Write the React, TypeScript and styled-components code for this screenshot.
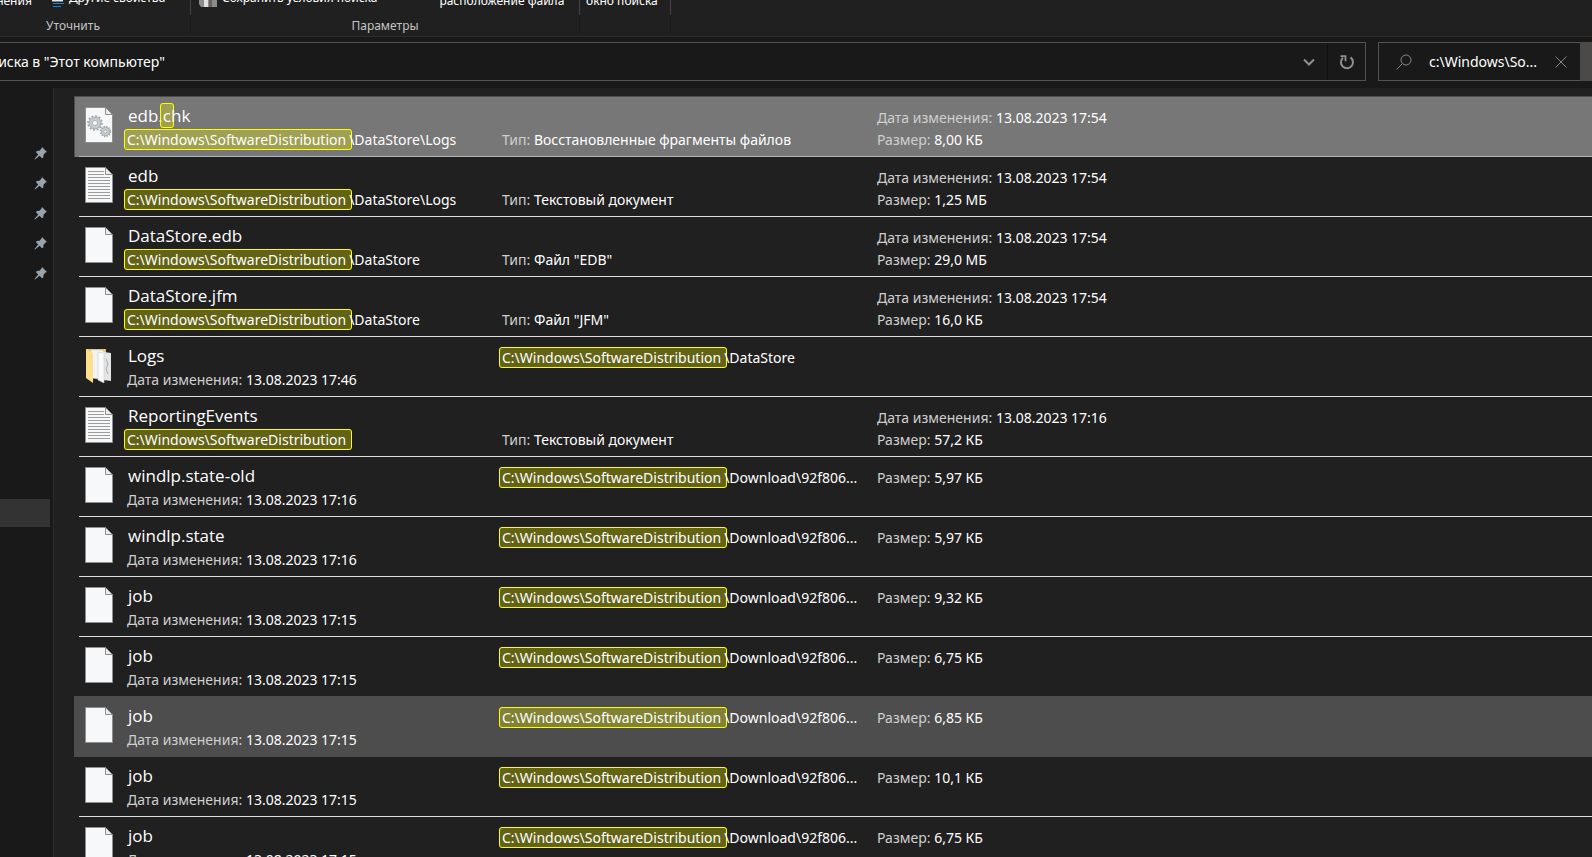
import React from "react";
import styled, { createGlobalStyle, css } from "styled-components";

const GlobalStyle = createGlobalStyle`
  * { box-sizing: border-box; }
  body {
    margin: 0;
    background: #202020;
    color: #ffffff;
    font-family: "Noto Sans", "Open Sans", sans-serif;
    font-size: 14px;
    line-height: 22px;
  }
  button, input { font: inherit; color: inherit; }
`;

const Window = styled.div`
  display: flex;
  flex-direction: column;
  height: 100vh;
  overflow: hidden;
`;

/* Ribbon */

const Ribbon = styled.header`
  display: flex;
  flex: none;
  height: 37px;
  overflow: hidden;
  border-bottom: 1px solid #2b2b2b;
`;

const RibbonGroup = styled.section<{ $width: number; $shift?: number }>`
  display: flex;
  flex-direction: column;
  flex: none;
  width: ${(p) => p.$width}px;
  margin-left: ${(p) => -(p.$shift ?? 0)}px;
`;

const RibbonBody = styled.div`
  display: flex;
  align-items: flex-end;
  height: 15px;
  border-right: 1px solid #444444;
`;

const RibbonLabel = styled.div`
  height: 18px;
  border-right: 1px solid #191919;
  color: #c4c4c4;
  font-size: 12px;
  line-height: 22px;
  text-align: center;
`;

const RibbonButton = styled.button<{ $indent: number; $raised?: boolean }>`
  display: flex;
  align-items: flex-end;
  gap: 5px;
  flex: none;
  margin: 0;
  padding: 0 0 ${(p) => (p.$raised ? 8 : 5)}px;
  margin-left: ${(p) => p.$indent}px;
  border: 0;
  background: none;
  font-size: 12px;
  line-height: 18px;
  white-space: nowrap;
`;

/* Address bar */

const NavBar = styled.div`
  display: flex;
  flex: none;
  gap: 12px;
  height: 51px;
  padding: 5px 0 7px;
  background: #191919;
`;

const Address = styled.div`
  display: flex;
  flex: 1;
  min-width: 0;
  border: 1px solid #535353;
  border-left: 0;
`;

const Crumb = styled.div`
  display: flex;
  align-items: center;
  justify-content: flex-end;
  width: 165px;
  margin-right: auto;
  overflow: hidden;
  white-space: nowrap;
`;

const IconButton = styled.button<{ $width: number; $divided?: boolean }>`
  display: flex;
  align-items: center;
  justify-content: center;
  width: ${(p) => p.$width}px;
  padding: 0;
  border: 0;
  border-left: ${(p) => (p.$divided ? "1px solid #111111" : "0")};
  background: none;
`;

const SearchBox = styled.form`
  display: flex;
  align-items: stretch;
  width: 214px;
  border: 1px solid #535353;
  border-right: 0;
`;

const SearchIcon = styled.span`
  display: flex;
  align-items: center;
  justify-content: center;
  width: 50px;
`;

const SearchInput = styled.input`
  flex: 1;
  min-width: 0;
  padding: 0;
  border: 0;
  outline: 0;
  background: none;
`;

const SearchGo = styled.button`
  width: 12px;
  margin: -1px 0;
  padding: 0;
  border: 0;
  background: #4c4a48;
`;

/* Body */

const Body = styled.div`
  display: flex;
  flex: 1;
  min-height: 0;
`;

const Sidebar = styled.nav`
  flex: none;
  width: 54px;
  padding-top: 50px;
  background: #191919;
  border-right: 1px solid #2b2b2b;
`;

const PinList = styled.ul`
  margin: 0 0 211px;
  padding: 0;
  list-style: none;
`;

const PinItem = styled.li`
  display: flex;
  align-items: center;
  justify-content: flex-end;
  height: 30px;
  padding-right: 5px;
`;

const CurrentItem = styled.div`
  width: 50px;
  height: 28px;
  background: #333333;
`;

const Results = styled.ul`
  flex: 1;
  min-width: 0;
  margin: 0;
  padding: 8px 0 0 20px;
  overflow: hidden;
  list-style: none;
`;

type RowState = "selected" | "hover" | undefined;

const Row = styled.li<{ $state: RowState }>`
  height: 61px;
  margin-bottom: -1px;
  padding-left: 4px;
  border: 1px solid transparent;
  border-width: 1px 0 0 1px;
  position: relative;
  ${(p) =>
    p.$state === "selected" &&
    css`
      background: #777777;
      border-color: #4c4c4c;
    `}
  ${(p) =>
    p.$state === "hover" &&
    css`
      background: #4d4d4d;
      border-color: #4d4d4d;
    `}
`;

const RowInner = styled.div<{ $state: RowState }>`
  display: grid;
  grid-template-columns: 28px 361px 361px 1fr;
  column-gap: 14px;
  height: 60px;
  padding: 10px 0 0 6px;
  border-bottom: 1px solid
    ${(p) => (p.$state === "hover" ? "#4d4d4d" : p.$state === "selected" ? "#b4b4b4" : "#dedede")};
`;

const Cell = styled.div`
  display: flex;
  flex-direction: column;
  min-width: 0;
  white-space: nowrap;
`;

const Line = styled.div`
  height: 22px;
`;

const Title = styled.div`
  height: 22px;
  padding-left: 1px;
  font-family: "Open Sans", "Noto Sans", sans-serif;
  font-size: 17px;
  line-height: 18px;
`;

const Label = styled.span`
  color: #cfcfcf;
`;

const Mark = styled.mark`
  margin: 0 -3px;
  padding: 0 2px;
  border: 1px solid #ffff00;
  border-radius: 3px;
  background: rgba(255, 255, 0, 0.3);
  color: inherit;
`;

const PathMark = styled(Mark)`
  padding-right: 5px;
`;

const PageIcon = ({ kind }: { kind: "blank" | "text" | "gears" }) => (
  <svg width="28" height="36" viewBox="0 0 28 36" aria-hidden="true">
    <path d="M.5.5h20l7 7v28H.5z" fill="#f7f8f9" stroke="#8f8f8f" />
    <path d="M20.5.5v7h7z" fill="#ececec" stroke="#8f8f8f" />
    {kind === "text" &&
      [4, 7, 10, 13, 16, 19, 22, 25, 28, 31].map((y) => (
        <path key={y} d={`M3 ${y + 0.5}h${y < 8 ? 16 : 22}`} stroke="#9c9c9c" />
      ))}
    {kind === "gears" && (
      <g fill="none">
        <circle cx="10" cy="16" r="6.8" stroke="#9aa3a9" strokeWidth="2" strokeDasharray="1.8 1.76" />
        <circle cx="10" cy="16" r="4.5" stroke="#c6cdd1" strokeWidth="3.6" />
        <circle cx="10" cy="16" r="5.9" stroke="#9aa3a9" strokeWidth=".7" />
        <circle cx="10" cy="16" r="2.6" stroke="#9aa3a9" strokeWidth=".8" />
        <circle cx="20.5" cy="24.5" r="4.8" stroke="#9aa3a9" strokeWidth="1.8" strokeDasharray="1.3 1.21" />
        <circle cx="20.5" cy="24.5" r="3" stroke="#c6cdd1" strokeWidth="2.8" />
        <circle cx="20.5" cy="24.5" r="4.1" stroke="#9aa3a9" strokeWidth=".7" />
        <circle cx="20.5" cy="24.5" r="1.6" stroke="#9aa3a9" strokeWidth=".8" />
      </g>
    )}
  </svg>
);

const FolderIcon = () => (
  <svg width="28" height="36" viewBox="0 0 28 36" aria-hidden="true">
    <path d="M1 2h20v28H1z" fill="#e9c46c" />
    <path d="M6 3h11l4 4v26l-14-2z" fill="#f3f3f3" stroke="#d2d2d2" strokeWidth=".6" />
    <path d="M19 5l7 1v28l-7-1z" fill="#e3e5e6" />
    <path d="M13 5l6 1v30l-6-3z" fill="#fafafa" stroke="#cfcfcf" strokeWidth=".6" />
    <path d="M21 12l2 5-2 5 2 5" stroke="#a5abae" fill="none" />
    <path d="M1 2l7 4v30l-7-5z" fill="#ffdf8e" />
  </svg>
);

const PinIcon = () => (
  <svg width="14" height="14" viewBox="0 0 14 14" aria-hidden="true">
    <path d="M8 1l5 5-1.4.6-2.1 2.2-.2 2.8-1.3.6-2.4-2.4L1 13.5.5 13l3.7-4.500L2 6.200l.7-1.300 2.800-.2L7.500 2.500z" fill="#98a3ab" />
  </svg>
);

type Item = {
  name: React.ReactNode;
  icon: "blank" | "text" | "gears" | "folder";
  date: string;
  path: string;
  size?: string;
  type?: string;
  state?: RowState;
};

const download = "\\Download\\92f806...";

const items: Item[] = [
  {
    name: (
      <>
        edb.<Mark>c</Mark>hk
      </>
    ),
    icon: "gears",
    date: "13.08.2023 17:54",
    path: "\\DataStore\\Logs",
    type: "Восстановленные фрагменты файлов",
    size: "8,00 КБ",
    state: "selected",
  },
  { name: "edb", icon: "text", date: "13.08.2023 17:54", path: "\\DataStore\\Logs", type: "Текстовый документ", size: "1,25 МБ" },
  { name: "DataStore.edb", icon: "blank", date: "13.08.2023 17:54", path: "\\DataStore", type: 'Файл "EDB"', size: "29,0 МБ" },
  { name: "DataStore.jfm", icon: "blank", date: "13.08.2023 17:54", path: "\\DataStore", type: 'Файл "JFM"', size: "16,0 КБ" },
  { name: "Logs", icon: "folder", date: "13.08.2023 17:46", path: "\\DataStore" },
  { name: "ReportingEvents", icon: "text", date: "13.08.2023 17:16", path: "", type: "Текстовый документ", size: "57,2 КБ" },
  { name: "windlp.state-old", icon: "blank", date: "13.08.2023 17:16", path: download, size: "5,97 КБ" },
  { name: "windlp.state", icon: "blank", date: "13.08.2023 17:16", path: download, size: "5,97 КБ" },
  { name: "job", icon: "blank", date: "13.08.2023 17:15", path: download, size: "9,32 КБ" },
  { name: "job", icon: "blank", date: "13.08.2023 17:15", path: download, size: "6,75 КБ" },
  { name: "job", icon: "blank", date: "13.08.2023 17:15", path: download, size: "6,85 КБ", state: "hover" },
  { name: "job", icon: "blank", date: "13.08.2023 17:15", path: download, size: "10,1 КБ" },
  { name: "job", icon: "blank", date: "13.08.2023 17:15", path: download, size: "6,75 КБ" },
];

const Field = ({ label, value }: { label: string; value: string }) => (
  <Line>
    <Label>{label}:</Label> {value}
  </Line>
);

const Path = ({ rest }: { rest: string }) => (
  <Line>
    <PathMark>C:\Windows\SoftwareDistribution</PathMark>
    {rest}
  </Line>
);

const ResultRow = ({ item }: { item: Item }) => {
  const date = <Field label="Дата изменения" value={item.date} />;
  const size = item.size && <Field label="Размер" value={item.size} />;
  const path = <Path rest={item.path} />;
  return (
    <Row $state={item.state}>
      <RowInner $state={item.state}>
        {item.icon === "folder" ? <FolderIcon /> : <PageIcon kind={item.icon} />}
        <Cell>
          <Title>{item.name}</Title>
          {item.type ? path : date}
        </Cell>
        <Cell>
          {item.type ? (
            <>
              <Line />
              <Field label="Тип" value={item.type} />
            </>
          ) : (
            path
          )}
        </Cell>
        <Cell>
          {item.type && date}
          {size}
        </Cell>
      </RowInner>
    </Row>
  );
};

export default function App() {
  return (
    <Window>
      <GlobalStyle />
      <Ribbon>
        <RibbonGroup $width={235} $shift={44}>
          <RibbonBody>
            <RibbonButton $indent={11}>изменения</RibbonButton>
            <RibbonButton $indent={20} $raised>
              <svg width="12" height="12" viewBox="0 0 12 12" aria-hidden="true">
                <path d="M0 5.500h11" stroke="#e8e8e8" strokeWidth="2" />
                <path d="M1 8.500h11M1 11.500h8" stroke="#1683d8" />
              </svg>
              Другие свойства
            </RibbonButton>
          </RibbonBody>
          <RibbonLabel>Уточнить</RibbonLabel>
        </RibbonGroup>
        <RibbonGroup $width={389}>
          <RibbonBody>
            <RibbonButton $indent={8} $raised>
              <svg width="18" height="14" viewBox="0 0 18 14" aria-hidden="true">
                <path d="M0 0h18v14H2l-2-3z" fill="#8c8c8c" />
                <path d="M5 7h4v7H5z" fill="#e0e0e0" />
                <path d="M10 7h3v7h-3z" fill="#6b5f62" />
              </svg>
              Сохранить условия поиска
            </RibbonButton>
            <RibbonButton $indent={62}>расположение файла</RibbonButton>
          </RibbonBody>
          <RibbonLabel>Параметры</RibbonLabel>
        </RibbonGroup>
        <RibbonGroup $width={91}>
          <RibbonBody>
            <RibbonButton $indent={6}>окно поиска</RibbonButton>
          </RibbonBody>
          <RibbonLabel />
        </RibbonGroup>
      </Ribbon>

      <NavBar>
        <Address>
          <Crumb>Результаты поиска в "Этот компьютер"</Crumb>
          <IconButton $width={37} aria-label="Предыдущие расположения">
            <svg width="12" height="8" viewBox="0 0 12 8" aria-hidden="true">
              <path d="M1 1.500l5 5 5-5" fill="none" stroke="#8f8f8f" strokeWidth="2" />
            </svg>
          </IconButton>
          <IconButton $width={38} $divided aria-label="Обновить">
            <svg width="16" height="16" viewBox="0 0 16 16" aria-hidden="true">
              <path d="M11.500 3.400a6 6 0 1 1-7.600.4" fill="none" stroke="#8f8f8f" strokeWidth="2" />
              <path d="M1.500 2.200h5v5" fill="none" stroke="#8f8f8f" strokeWidth="1.800" />
            </svg>
          </IconButton>
        </Address>
        <SearchBox onSubmit={(e) => e.preventDefault()}>
          <SearchIcon>
            <svg width="16" height="16" viewBox="0 0 16 16" aria-hidden="true">
              <circle cx="10" cy="6" r="5" fill="none" stroke="#8d8484" />
              <path d="M6.500 9.500L.5 15.500" stroke="#8d8484" />
            </svg>
          </SearchIcon>
          <SearchInput aria-label="Поиск" defaultValue="c:\Windows\So..." />
          <IconButton type="button" $width={38} aria-label="Очистить">
            <svg width="12" height="12" viewBox="0 0 12 12" aria-hidden="true">
              <path d="M.5.5l11 11M11.500.5l-11 11" stroke="#8d8484" />
            </svg>
          </IconButton>
          <SearchGo aria-label="Найти" />
        </SearchBox>
      </NavBar>

      <Body>
        <Sidebar>
          <PinList>
            {[0, 1, 2, 3, 4].map((n) => (
              <PinItem key={n}>
                <PinIcon />
              </PinItem>
            ))}
          </PinList>
          <CurrentItem />
        </Sidebar>
        <Results>
          {items.map((item, i) => (
            <ResultRow key={i} item={item} />
          ))}
        </Results>
      </Body>
    </Window>
  );
}
